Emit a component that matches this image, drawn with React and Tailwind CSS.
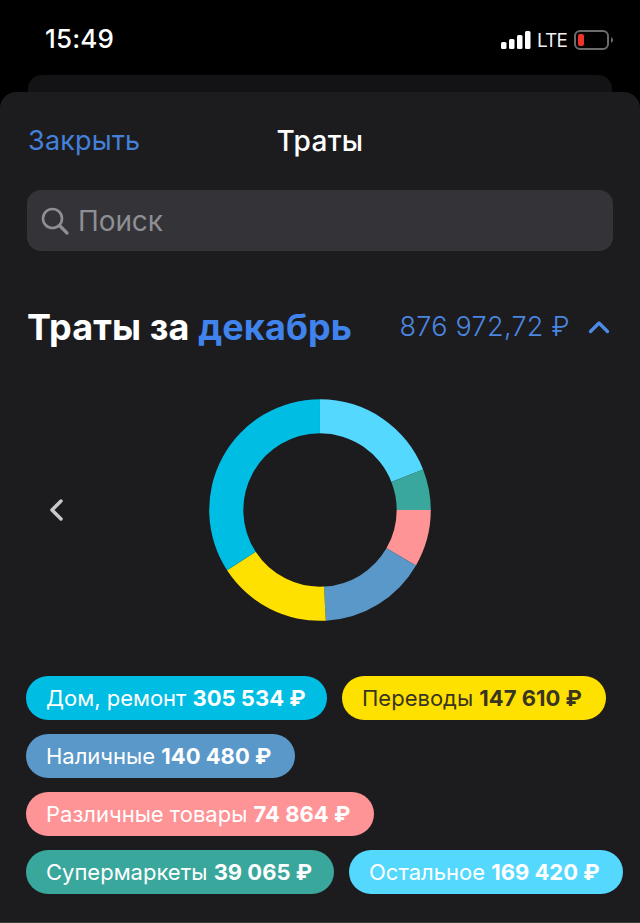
import React from "react";

const R = 110.8, r = 76.7;
const pt = (rad, deg) => {
  const a = (deg * Math.PI) / 180;
  return `${(111 + rad * Math.sin(a)).toFixed(2)} ${(111 - rad * Math.cos(a)).toFixed(2)}`;
};
const wedge = (s, e) =>
  `M${pt(R, s)} A${R} ${R} 0 ${e - s > 180 ? 1 : 0} 1 ${pt(R, e)} L${pt(r, e)} A${r} ${r} 0 ${e - s > 180 ? 1 : 0} 0 ${pt(r, s)}Z`;

const segs = [
  [0, 68.5, "#54d8fe"],
  [68.5, 90, "#3aa79c"],
  [90, 120, "#ff9497"],
  [120, 177, "#5a98c9"],
  [177, 237, "#ffe100"],
  [237, 360, "#00bde3"],
];

const pills = [
  ["Дом, ремонт", "305 534 ₽", "bg-[#00bde3] text-white w-[301px]"],
  ["Переводы", "147 610 ₽", "bg-[#ffe100] text-[#3a3520] w-[264px]"],
  ["Наличные", "140 480 ₽", "bg-[#5a98c9] text-white w-[269px]"],
  ["Различные товары", "74 864 ₽", "bg-[#ff9497] text-white w-[348px]"],
  ["Супермаркеты", "39 065 ₽", "bg-[#3aa79c] text-white w-[308px]"],
  ["Остальное", "169 420 ₽", "bg-[#54d8fe] text-white w-[274px]"],
];

export default function App() {
  return (
    <div className="h-[923px] w-[640px] overflow-hidden bg-black flex flex-col font-['Inter',sans-serif] text-white">
      <div className="h-[75px] shrink-0 flex items-start justify-between pt-[23px] pl-[45px] pr-[25px]">
        <span className="text-[26px] leading-[32px] font-medium tracking-[0.2px]">15:49</span>
        <div className="flex items-center h-[34px]">
          <svg width="30" height="18" viewBox="0 0 30 18" fill="white">
            <rect x="0" y="11" width="5.5" height="7" rx="1.5" />
            <rect x="8" y="8" width="5.5" height="10" rx="1.5" />
            <rect x="16" y="4" width="5.5" height="14" rx="1.5" />
            <rect x="24" y="0" width="5.5" height="18" rx="1.5" />
          </svg>
          <span className="ml-[6px] pt-[1px] text-[19px] leading-[24px] tracking-[-0.9px] text-white/95">LTE</span>
          <svg width="41" height="20" viewBox="0 0 41 20" className="ml-[7px]">
            <rect x="1" y="1" width="33" height="18" rx="5" fill="none" stroke="#6b6b6b" strokeWidth="2" />
            <rect x="4" y="4" width="6" height="12" rx="2" fill="#f0312c" />
            <path d="M37 7 C38.5 7.8 39 9 39 10 C39 11 38.5 12.2 37 13Z" fill="#6b6b6b" />
          </svg>
        </div>
      </div>

      <div className="h-[17px] shrink-0 mx-[28px] rounded-t-[14px] bg-[#131315]" />

      <div className="flex-1 bg-[#1c1c1e] rounded-t-[16px] flex flex-col border-b border-[#3a3a3a]">
        <div className="relative h-[98px] shrink-0 flex items-center justify-center">
          <span className="absolute left-[28px] text-[27px] text-[#4480dc] tracking-[0.2px]">Закрыть</span>
          <span className="text-[28px] font-medium tracking-[0.3px]">Траты</span>
        </div>

        <div className="mx-[27px] h-[61px] shrink-0 rounded-[14px] bg-[#333338] flex items-center pl-[13px] gap-[8px]">
          <svg width="30" height="30" viewBox="0 0 30 30" fill="none" stroke="#8e8e93" strokeWidth="2.6" strokeLinecap="round">
            <circle cx="12.5" cy="12.5" r="9.5" />
            <path d="M19.5 19.5 L27 27" strokeWidth="3.2" />
          </svg>
          <span className="text-[28px] text-[#8e8e93] tracking-[-0.1px]">Поиск</span>
        </div>

        <div className="mt-[51px] ml-[27px] mr-[28px] h-[50px] flex items-center justify-between shrink-0">
          <span className="text-[36px] font-bold leading-[46px] tracking-[0.1px]">
            Траты за <span className="text-[#4083ec]">декабрь</span>
          </span>
          <div className="flex items-center gap-[18px] mr-[2px]">
            <span className="text-[27px] pt-[1px] text-[#4b86e0] font-light tracking-[0.3px]">876 972,72 ₽</span>
            <svg width="22" height="14" viewBox="0 0 22 14" fill="none" stroke="#4b8ae6" strokeWidth="3.4" strokeLinecap="round" strokeLinejoin="round">
              <path d="M2.5 11.5 L11 3 L19.5 11.5" />
            </svg>
          </div>
        </div>

        <div className="relative h-[222px] mt-[47px] flex justify-center shrink-0">
          <svg
            className="absolute left-[49px] top-[99px]"
            width="15"
            height="24"
            viewBox="0 0 15 24"
            fill="none"
            stroke="#c8c8ca"
            strokeWidth="3.5"
            strokeLinecap="round"
            strokeLinejoin="round"
          >
            <path d="M12 3 L3 12 L12 21" />
          </svg>
          <svg width="222" height="222" viewBox="0 0 222 222">
            {segs.map(([s, e, c]) => (
              <path key={c} d={wedge(s, e === 360 ? 359.99 : e)} fill={c} />
            ))}
          </svg>
        </div>

        <div className="mt-[55px] pl-[26px] flex flex-wrap gap-x-[15px] gap-y-[14px]">
          {pills.map(([label, amount, cls]) => (
            <div
              key={label}
              className={`h-[44px] pt-[1px] pl-[20px] rounded-full flex items-center whitespace-nowrap text-[22px] ${cls}`}
            >
              <span>{label}&nbsp;</span>
              <span className="font-bold">{amount}</span>
            </div>
          ))}
        </div>
      </div>
    </div>
  );
}
